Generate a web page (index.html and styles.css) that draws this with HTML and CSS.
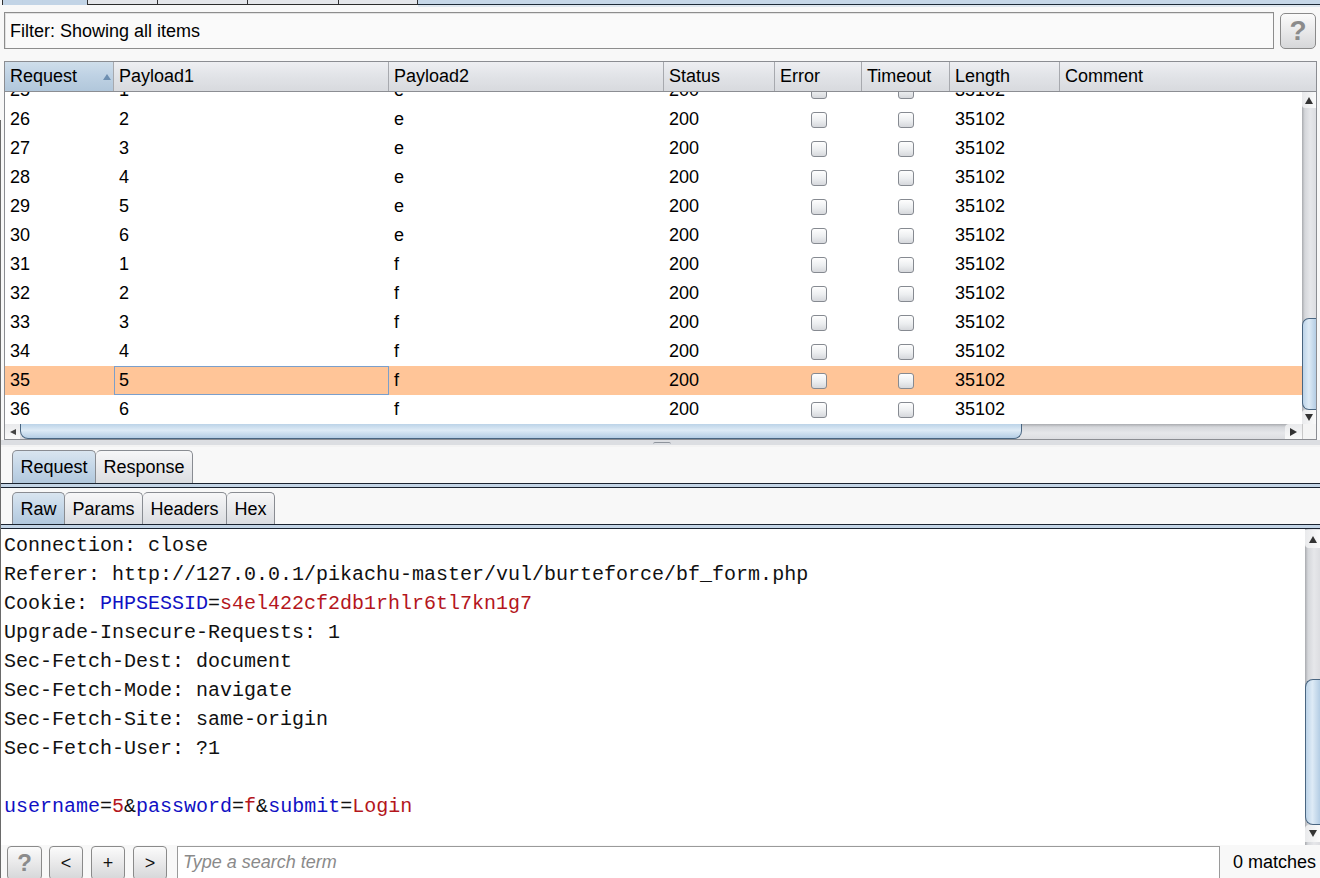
FILE: index.html
```html
<!DOCTYPE html>
<html>
<head>
<meta charset="utf-8">
<title>Intruder results</title>
<link rel="stylesheet" href="styles.css">
</head>
<body>
<div class="top-tabs">
  <div class="tt tt1"></div>
  <div class="tt tt2"></div>
  <div class="tt tt3"></div>
  <div class="tt tt4"></div>
  <div class="tt tt5"></div>
  <div class="tt-fill"></div>
</div>

<div class="filter-row">
  <div class="filter-box">Filter: Showing all items</div>
  <div class="help-btn">?</div>
</div>

<div class="results">
  <div class="thead">
    <div class="th sorted">Request<span class="sort-up"></span></div>
    <div class="th">Payload1</div>
    <div class="th">Payload2</div>
    <div class="th">Status</div>
    <div class="th">Error</div>
    <div class="th">Timeout</div>
    <div class="th">Length</div>
    <div class="th last">Comment</div>
  </div>
  <div class="tbody">
    <div class="view">
      <div class="rows">
        <div class="tr"><div class="td">25</div><div class="td">1</div><div class="td">e</div><div class="td">200</div><div class="td ck"><span class="box"></span></div><div class="td ck"><span class="box"></span></div><div class="td">35102</div><div class="td"></div></div>
        <div class="tr"><div class="td">26</div><div class="td">2</div><div class="td">e</div><div class="td">200</div><div class="td ck"><span class="box"></span></div><div class="td ck"><span class="box"></span></div><div class="td">35102</div><div class="td"></div></div>
        <div class="tr"><div class="td">27</div><div class="td">3</div><div class="td">e</div><div class="td">200</div><div class="td ck"><span class="box"></span></div><div class="td ck"><span class="box"></span></div><div class="td">35102</div><div class="td"></div></div>
        <div class="tr"><div class="td">28</div><div class="td">4</div><div class="td">e</div><div class="td">200</div><div class="td ck"><span class="box"></span></div><div class="td ck"><span class="box"></span></div><div class="td">35102</div><div class="td"></div></div>
        <div class="tr"><div class="td">29</div><div class="td">5</div><div class="td">e</div><div class="td">200</div><div class="td ck"><span class="box"></span></div><div class="td ck"><span class="box"></span></div><div class="td">35102</div><div class="td"></div></div>
        <div class="tr"><div class="td">30</div><div class="td">6</div><div class="td">e</div><div class="td">200</div><div class="td ck"><span class="box"></span></div><div class="td ck"><span class="box"></span></div><div class="td">35102</div><div class="td"></div></div>
        <div class="tr"><div class="td">31</div><div class="td">1</div><div class="td">f</div><div class="td">200</div><div class="td ck"><span class="box"></span></div><div class="td ck"><span class="box"></span></div><div class="td">35102</div><div class="td"></div></div>
        <div class="tr"><div class="td">32</div><div class="td">2</div><div class="td">f</div><div class="td">200</div><div class="td ck"><span class="box"></span></div><div class="td ck"><span class="box"></span></div><div class="td">35102</div><div class="td"></div></div>
        <div class="tr"><div class="td">33</div><div class="td">3</div><div class="td">f</div><div class="td">200</div><div class="td ck"><span class="box"></span></div><div class="td ck"><span class="box"></span></div><div class="td">35102</div><div class="td"></div></div>
        <div class="tr"><div class="td">34</div><div class="td">4</div><div class="td">f</div><div class="td">200</div><div class="td ck"><span class="box"></span></div><div class="td ck"><span class="box"></span></div><div class="td">35102</div><div class="td"></div></div>
        <div class="tr selected"><div class="td">35</div><div class="td focus">5</div><div class="td">f</div><div class="td">200</div><div class="td ck"><span class="box"></span></div><div class="td ck"><span class="box"></span></div><div class="td">35102</div><div class="td"></div></div>
        <div class="tr"><div class="td">36</div><div class="td">6</div><div class="td">f</div><div class="td">200</div><div class="td ck"><span class="box"></span></div><div class="td ck"><span class="box"></span></div><div class="td">35102</div><div class="td"></div></div>
      </div>
    </div>
    <div class="vscroll">
      <div class="arrow-box"><span class="tri-up"></span></div>
      <div class="vtrack"><div class="vthumb"></div></div>
      <div class="arrow-box down"><span class="tri-down"></span></div>
    </div>
  </div>
  <div class="hscroll">
    <div class="harrow"><span class="tri-left"></span></div>
    <div class="htrack"><div class="hthumb"></div></div>
    <div class="harrow right"><span class="tri-right"></span></div>
    <div class="corner"></div>
  </div>
</div>

<div class="splitter"><span class="grip"></span></div>

<div class="tabrow first">
  <div class="tab active">Request</div>
  <div class="tab">Response</div>
</div>
<div class="band"></div>
<div class="tabrow second">
  <div class="tab active">Raw</div>
  <div class="tab">Params</div>
  <div class="tab">Headers</div>
  <div class="tab">Hex</div>
</div>
<div class="band"></div>

<div class="editor">
  <div class="code"><div class="line">Connection: close</div><div class="line">Referer: http://127.0.0.1/pikachu-master/vul/burteforce/bf_form.php</div><div class="line">Cookie: <span class="pn">PHPSESSID</span>=<span class="pv">s4el422cf2db1rhlr6tl7kn1g7</span></div><div class="line">Upgrade-Insecure-Requests: 1</div><div class="line">Sec-Fetch-Dest: document</div><div class="line">Sec-Fetch-Mode: navigate</div><div class="line">Sec-Fetch-Site: same-origin</div><div class="line">Sec-Fetch-User: ?1</div><div class="line"> </div><div class="line"><span class="pn">username</span>=<span class="pv">5</span>&amp;<span class="pn">password</span>=<span class="pv">f</span>&amp;<span class="pn">submit</span>=<span class="pv">Login</span></div></div>
  <div class="escroll">
    <div class="earrow"><span class="tri-up"></span></div>
    <div class="etrack"><div class="ethumb"></div></div>
    <div class="earrow down"><span class="tri-down"></span></div>
  </div>
</div>

<div class="searchbar">
  <div class="sbtn q">?</div>
  <div class="sbtn">&lt;</div>
  <div class="sbtn">+</div>
  <div class="sbtn">&gt;</div>
  <div class="search-input">Type a search term</div>
  <div class="matches">0 matches</div>
</div>
</body>
</html>
```
FILE: styles.css
```css
* { box-sizing: border-box; margin: 0; padding: 0; }
html, body { width: 1320px; height: 878px; overflow: hidden; }
body {
  background: #f8f8f8;
  font-family: "Liberation Sans", Arial, sans-serif;
  font-size: 18px;
  color: #000;
  position: relative;
}
body::after {
  content: "";
  position: absolute;
  left: 0;
  top: 120px;
  bottom: 0;
  width: 1px;
  background: #6a6a6a;
}

/* top tab strip remnant */
.top-tabs { display: flex; height: 7px; }
.tt {
  height: 5px;
  background: #e4e6ea;
  border-right: 1px solid #303030;
  border-bottom: 1px solid #2c2c2c;
}
.tt1 { background: #c2d4e6; border-left: 1px solid #303030; border-bottom: none; margin-left: 2px; width: 86px; }
.tt2 { width: 70px; }
.tt3 { width: 90px; }
.tt4 { width: 91px; }
.tt5 { width: 79px; }
.tt-fill {
  flex: 1;
  height: 7px;
  background: linear-gradient(#c6d7e8 0, #c6d7e8 4px, #1d2a38 4px, #1d2a38 5px, #dfe7ef 5px);
}

/* filter */
.filter-row { display: flex; gap: 6px; margin: 5px 4px 0 4px; height: 37px; }
.filter-box {
  width: 1270px;
  height: 37px;
  border: 1px solid #8d8d8d;
  background: #fafafa;
  box-shadow: inset 1px 1px 0 #e2e2e2;
  padding: 1px 0 0 5px;
  line-height: 35px;
}
.help-btn {
  margin-top: 1px;
  width: 36px;
  height: 36px;
  border: 1px solid #8a8a8a;
  border-radius: 5px;
  background: linear-gradient(#fbfbfb, #e9e9ea 50%, #d6d7d9);
  color: #8b8b8b;
  font-weight: bold;
  font-size: 28px;
  line-height: 34px;
  text-align: center;
}

/* results table */
.results {
  margin: 12px 3px 0 4px;
  width: 1313px;
  border: 1px solid #8b8d92;
  background: #fff;
}
.thead, .tr {
  display: grid;
  grid-template-columns: 109px 275px 275px 111px 87px 88px 110px 1fr;
}
.thead {
  height: 30px;
  border-bottom: 1px solid #8c8e93;
  background: linear-gradient(#eeeff2, #e2e4e8 45%, #d8dade);
  position: relative;
  z-index: 1;
}
.th {
  border-right: 1px solid #a7a9ae;
  padding-left: 5px;
  line-height: 29px;
  white-space: nowrap;
  position: relative;
}
.th.last { border-right: none; }
.th.sorted { background: linear-gradient(#cfdeeb, #bfd2e4 45%, #b1c7db); }
.sort-up {
  position: absolute;
  left: 98px;
  top: 12px;
  width: 0;
  height: 0;
  border-left: 4px solid transparent;
  border-right: 4px solid transparent;
  border-bottom: 6px solid #6e8fb1;
}
.tbody { display: flex; height: 332px; }
.view { flex: 1; overflow: hidden; }
.rows { margin-top: -16px; }
.tr { height: 29px; }
.td { padding-left: 5px; line-height: 29px; white-space: nowrap; }
.td.ck { display: flex; align-items: center; justify-content: center; padding-left: 0; }
.box {
  display: block;
  width: 16px;
  height: 16px;
  border: 1px solid #868a91;
  border-radius: 3px;
  background: linear-gradient(#fefefe, #eceef0 55%, #d6d8dc);
}
.tr.selected { background: #ffc598; }
.td.focus { border: 1px solid #7b9fcb; line-height: 27px; padding-left: 4px; }

/* vertical scrollbar (table) */
.vscroll {
  width: 14px;
  display: flex;
  flex-direction: column;
  background: linear-gradient(90deg, #a9abaf, #d4d6da 20%, #e6e7ea 60%, #dcdde1);
}
.arrow-box {
  height: 16px;
  background: linear-gradient(90deg, #e9eaec, #fafafa);
  display: flex;
  align-items: center;
  justify-content: center;
  border-bottom-left-radius: 3px;
}
.arrow-box.down { height: 14px; border-radius: 0; border-top-left-radius: 3px; }
.vtrack { flex: 1; display: flex; flex-direction: column; justify-content: flex-end; }
.vthumb {
  height: 92px;
  border: 1px solid #4a6681;
  border-right: none;
  border-radius: 7px 0 0 7px;
  background: linear-gradient(90deg, #bcd3e8, #deebf6 45%, #b4cde4);
}
.tri-up { width: 0; height: 0; border-left: 4px solid transparent; border-right: 4px solid transparent; border-bottom: 7px solid #333; }
.tri-down { width: 0; height: 0; border-left: 4px solid transparent; border-right: 4px solid transparent; border-top: 7px solid #333; }
.tri-left { width: 0; height: 0; border-top: 3px solid transparent; border-bottom: 3px solid transparent; border-right: 6px solid #444; }
.tri-right { width: 0; height: 0; border-top: 4px solid transparent; border-bottom: 4px solid transparent; border-left: 7px solid #333; }

/* horizontal scrollbar */
.hscroll {
  display: flex;
  height: 15px;
  background: linear-gradient(#a9abaf, #d4d6da 20%, #e6e7ea 60%, #dcdde1);
}
.harrow {
  width: 15px;
  background: linear-gradient(#e9eaec, #fafafa);
  display: flex;
  align-items: center;
  justify-content: center;
}
.harrow.right { width: 17px; border-top-left-radius: 4px; }
.htrack { flex: 1; }
.hthumb {
  width: 1002px;
  height: 15px;
  border: 1px solid #4a6681;
  border-top: none;
  border-radius: 0 0 8px 8px;
  background: linear-gradient(#bcd3e8, #deebf6 45%, #b4cde4);
}
.corner { width: 14px; background: #f4f4f4; border-left: 1px solid #c8c8c8; }

/* splitter */
.splitter {
  height: 7px;
  background: linear-gradient(#dcdee2 0, #dcdee2 5px, #f3f3f3 5px);
  display: flex;
  justify-content: center;
}
.grip {
  margin-top: 2px;
  width: 18px;
  height: 2px;
  border-top: 1px solid #8e949c;
  border-left: 1px solid #b5bac0;
  border-right: 1px solid #b5bac0;
  border-radius: 2px 2px 0 0;
  margin-left: 4px;
}

/* tab rows */
.tabrow { display: flex; padding-left: 12px; align-items: flex-end; }
.tabrow.first { height: 36px; }
.tabrow.second { height: 36px; }
.tab {
  height: 33px;
  padding: 0 7.5px;
  border: 1px solid #898c92;
  border-bottom: none;
  border-radius: 5px 5px 0 0;
  background: linear-gradient(#f7f7f8, #e6e7ea 60%, #dbdde1);
  line-height: 33px;
  white-space: nowrap;
}
.tab + .tab { border-left: none; }
.tabrow.second .tab { height: 32px; line-height: 32px; }
.tab.active { background: linear-gradient(#d9e5f0, #c2d5e7 55%, #b2c8dd); }
.band {
  height: 5px;
  background: linear-gradient(#1a2330 0, #1a2330 1px, #c4d5e6 1px, #c4d5e6 4px, #1a2330 4px);
}

/* editor */
.editor { display: flex; height: 316px; background: #fff; }
.code {
  flex: 1;
  font-family: "Liberation Mono", "DejaVu Sans Mono", monospace;
  font-size: 20px;
  line-height: 29px;
  padding: 2px 0 0 4px;
  white-space: pre;
  color: #111;
}
.line { height: 29px; }
.pn { color: #1111c4; }
.pv { color: #b4161c; }
.escroll {
  width: 15px;
  display: flex;
  flex-direction: column;
  padding: 1px 0 3px;
  background: linear-gradient(90deg, #a9abaf, #d4d6da 20%, #e6e7ea 60%, #dcdde1);
}
.earrow {
  height: 18px;
  background: linear-gradient(90deg, #e9eaec, #fafafa);
  display: flex;
  align-items: center;
  justify-content: center;
  border-bottom-left-radius: 4px;
}
.earrow.down { height: 17px; border-radius: 0; border-top-left-radius: 4px; }
.etrack { flex: 1; display: flex; flex-direction: column; justify-content: flex-end; }
.ethumb {
  height: 146px;
  border: 1px solid #4a6681;
  border-right: none;
  border-radius: 8px 0 0 8px;
  background: linear-gradient(90deg, #bcd3e8, #deebf6 45%, #b4cde4);
}

/* search bar */
.searchbar {
  display: flex;
  align-items: flex-start;
  height: 33px;
  padding: 1px 0 0 7px;
}
.sbtn {
  width: 34px;
  height: 34px;
  margin-right: 8px;
  border: 1px solid #8a8a8a;
  border-radius: 4px;
  background: linear-gradient(#fbfbfb, #e9e9ea 50%, #d6d7d9);
  text-align: center;
  line-height: 32px;
  font-size: 18px;
  color: #111;
}
.sbtn.q { width: 35px; color: #8b8b8b; font-weight: bold; font-size: 24px; margin-right: 7px; }
.search-input {
  margin-left: 2px;
  width: 1043px;
  height: 34px;
  border: 1px solid #9a9a9a;
  background: #fff;
  padding-left: 5px;
  line-height: 31px;
  font-style: italic;
  color: #8a8a8a;
}
.matches { margin-left: 13px; line-height: 33px; }
```
